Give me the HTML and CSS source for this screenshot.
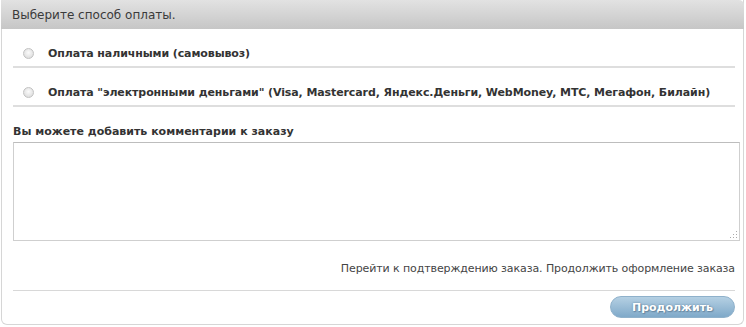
FILE: index.html
```html
<!DOCTYPE html>
<html lang="ru">
<head>
<meta charset="utf-8">
<link rel="stylesheet" href="styles.css">
</head>
<body>
<div class="panel">
  <div class="panel-head">Выберите способ оплаты.</div>
  <div class="panel-body">
    <label class="option"><span class="radio"></span><span class="opt-text">Оплата наличными (самовывоз)</span></label>
    <label class="option"><span class="radio"></span><span class="opt-text">Оплата "электронными деньгами" (Visa, Mastercard, Яндекс.Деньги, WebMoney, МТС, Мегафон, Билайн)</span></label>
    <div class="comment-title">Вы можете добавить комментарии к заказу</div>
    <div class="textarea"><span class="grip"></span></div>
    <div class="note">Перейти к подтверждению заказа. Продолжить оформление заказа</div>
    <div class="actions"><button class="btn">Продолжить</button></div>
  </div>
</div>
</body>
</html>
```
FILE: styles.css
```css
html, body { margin: 0; padding: 0; background: #fff; }
body { font-family: "DejaVu Sans", Verdana, sans-serif; color: #333; }
.panel {
  margin: 0 2px 1px 1px;
  height: 325px;
  box-sizing: border-box;
  border: 1px solid #d6d6d6;
  border-top: none;
  border-radius: 0 0 6px 6px;
  display: flex;
  flex-direction: column;
}
.panel-head {
  height: 29px;
  box-sizing: border-box;
  padding: 0 0 0 11px;
  display: flex;
  align-items: center;
  font-size: 12px;
  color: #3a3a3a;
  background: linear-gradient(#e2e2e2, #c6c6c6);
  border-radius: 0 5px 0 0;
  margin: 0 -1px;
}
.panel-body { padding: 0 8px 0 11px; display: flex; flex-direction: column; }
.option {
  display: flex;
  align-items: flex-end;
  height: 39px;
  box-sizing: border-box;
  padding: 0 0 6px 10px;
  border-bottom: 2px solid #dedede;
  font-size: 11px;
  line-height: 13px;
  font-weight: bold;
  color: #333;
  letter-spacing: -0.1px;
}
.radio {
  width: 11px; height: 11px; border-radius: 50%;
  border: 1px solid #c2c2c2;
  box-sizing: border-box;
  background: radial-gradient(circle at 50% 40%, #fbfbfb, #d6d6d6);
  margin: 0 14px 1px 0;
  flex: none;
}
.comment-title {
  font-size: 11px;
  font-weight: bold;
  color: #333;
  margin-top: 18px;
  height: 17px;
}
.textarea {
  height: 99px;
  box-sizing: border-box;
  border: 1px solid #cfcfcf;
  border-top-color: #bdbdbd;
  position: relative;
  margin-right: -5px;
}
.grip {
  position: absolute; right: 2px; bottom: 2px; width: 8px; height: 8px;
  background:
    radial-gradient(circle, #aaa 0.6px, transparent 0.9px) 0 0 / 3px 3px;
  clip-path: polygon(100% 0, 100% 100%, 0 100%);
}
.note {
  text-align: right;
  font-size: 11px;
  color: #444;
  letter-spacing: -0.1px;
  margin-top: 21px;
  height: 28px;
  border-bottom: 1px solid #d8d8d8;
}
.actions { display: flex; justify-content: flex-end; padding-top: 5px; }
.btn {
  width: 125px; height: 22px;
  border: 1px solid #8fb1cb;
  border-radius: 11px;
  background: linear-gradient(#b5d0e3, #7fa9c9);
  color: #fff;
  font-family: "DejaVu Sans", Verdana, sans-serif;
  font-size: 11px;
  font-weight: bold;
  text-shadow: 0 0 2px #5b7e99, 1px 1px 1px #6b8aa3;
  padding: 0;
}
```
